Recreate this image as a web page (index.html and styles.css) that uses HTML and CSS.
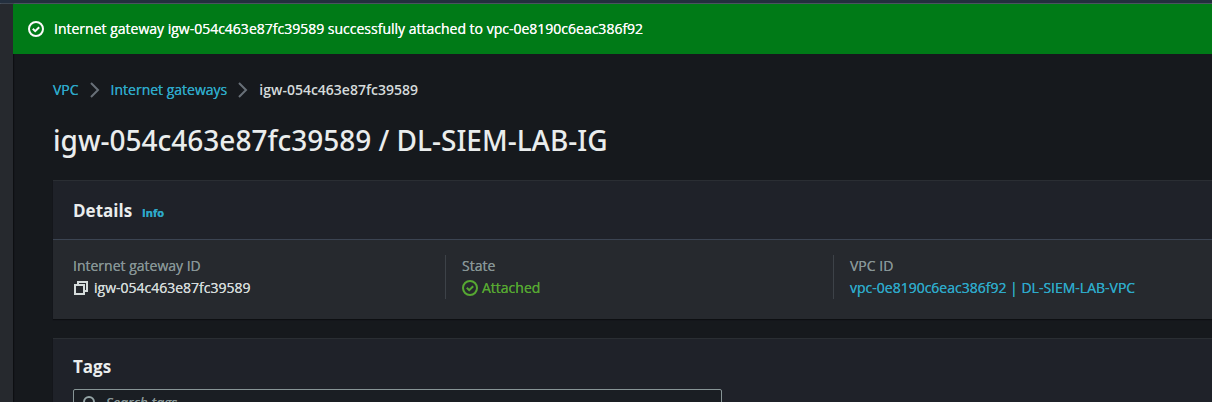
FILE: index.html
```html
<!DOCTYPE html>
<html lang="en">
<head>
<meta charset="utf-8">
<meta name="viewport" content="width=device-width, initial-scale=1">
<title>Internet gateway details</title>
<link rel="stylesheet" href="styles.css">
</head>
<body>
<div class="topbar"></div>
<div class="shell">
  <aside class="rail"></aside>
  <main class="main">
    <div class="flash" role="status">
      <svg class="icon" viewBox="0 0 16 16" aria-hidden="true"><circle cx="8" cy="8" r="7"/><path d="M4.8 7.8l2.4 2.4 4-4"/></svg>
      <span>Internet gateway igw-054c463e87fc39589 successfully attached to vpc-0e8190c6eac386f92</span>
    </div>
    <div class="content">
      <nav class="crumbs" aria-label="Breadcrumbs">
        <a href="#">VPC</a>
        <svg class="chevron" viewBox="0 0 10 16" aria-hidden="true"><path d="M1 1l7 7-7 7"/></svg>
        <a href="#">Internet gateways</a>
        <svg class="chevron" viewBox="0 0 10 16" aria-hidden="true"><path d="M1 1l7 7-7 7"/></svg>
        <span class="current">igw-054c463e87fc39589</span>
      </nav>
      <h1 class="title">igw-054c463e87fc39589 / DL-SIEM-LAB-IG</h1>
      <section class="card">
        <header class="card-header">
          <h2 class="heading">Details</h2>
          <a class="info" href="#">Info</a>
        </header>
        <dl class="fields">
          <div class="field">
            <dt>Internet gateway ID</dt>
            <dd>
              <button class="copy" type="button" aria-label="Copy ID"><svg class="icon" viewBox="0 0 16 16" aria-hidden="true"><path d="M2 5h9v9H2zM5 5V2h9v9h-3"/></svg></button>
              <span>igw-054c463e87fc39589</span>
            </dd>
          </div>
          <div class="field">
            <dt>State</dt>
            <dd class="success">
              <svg class="icon" viewBox="0 0 16 16" aria-hidden="true"><circle cx="8" cy="8" r="7"/><path d="M4.8 7.8l2.4 2.4 4-4"/></svg>
              <span>Attached</span>
            </dd>
          </div>
          <div class="field">
            <dt>VPC ID</dt>
            <dd><a href="#">vpc-0e8190c6eac386f92 | DL-SIEM-LAB-VPC</a></dd>
          </div>
        </dl>
      </section>
      <section class="card tags">
        <h2 class="heading">Tags</h2>
        <label class="search">
          <svg class="icon" viewBox="0 0 16 16" aria-hidden="true"><circle cx="7" cy="7" r="5"/><path d="M11 11l4 4"/></svg>
          <input type="search" placeholder="Search tags" aria-label="Search tags">
        </label>
      </section>
    </div>
  </main>
</div>
</body>
</html>
```
FILE: styles.css
```css
* { box-sizing: border-box; }

body {
  display: flex;
  flex-direction: column;
  height: 100vh;
  margin: 0;
  overflow: hidden;
  background: #16191d;
  color: #d5dbdb;
  font: 500 14px/22px "Open Sans", "Noto Sans", sans-serif;
  text-shadow: 0 0 0 currentColor;
}

a { color: #2ea9c9; text-decoration: none; text-shadow: 0 0 0 currentColor; }

.topbar { flex: none; height: 4px; background: #232f3e; border-bottom: 1px solid #4a5360; }
.shell { display: flex; flex: 1; min-height: 0; }
.rail { flex: none; width: 13px; background: #26292e; box-shadow: 1px 0 1px #0d0f12; }
.main { flex: 1; min-width: 0; overflow: hidden; }

.icon {
  flex: none;
  display: block;
  width: 16px;
  height: 16px;
  fill: none;
  stroke: currentColor;
  stroke-width: 2;
}

.flash {
  display: flex;
  align-items: center;
  gap: 10px;
  height: 50px;
  padding: 0 15px;
  background: #007a17;
  color: #fafafa;
}

.content { padding: 25px 0 0 40px; }

.crumbs { display: flex; align-items: center; gap: 11px; }
.crumbs .current { font-weight: 600; text-shadow: none; }
.chevron { width: 10px; height: 16px; fill: none; stroke: #687078; stroke-width: 2; }

.title {
  margin: 21px 0 22px;
  color: #eaeded;
  font-family: "Noto Sans", sans-serif;
  font-size: 28px;
  font-weight: 500;
  line-height: 36px;
  text-shadow: none;
}

.card {
  margin-bottom: 19px;
  border-top: 1px solid #2a2e33;
  background: #1f2229;
  box-shadow: 0 1px 1px #0d0f12;
}

.card-header {
  display: flex;
  align-items: baseline;
  gap: 10px;
  padding: 19px 20px 15px;
  border-bottom: 1px solid #3b4452;
}

.heading { margin: 0; color: #eaeded; font-size: 17px; font-weight: 700; line-height: 22px; text-shadow: none; }
.info { font-size: 11px; font-weight: 700; }

.fields {
  display: grid;
  grid-template-columns: 392fr 388fr 379fr;
  margin: 0;
  padding: 15px 0 20px;
  background: #26292e;
}

.field { padding-left: 16px; border-left: 1px solid #3d4248; }
.field:first-child { padding-left: 20px; border-left: 0; }
.field dt { color: #879596; }
.field dd { display: flex; align-items: center; gap: 5px; margin: 0; }
.field .success { gap: 4px; color: #56a832; }

.copy { padding: 0; border: 0; background: none; color: inherit; }

.tags { padding: 17px 20px; }

.search {
  display: flex;
  align-items: center;
  gap: 8px;
  width: 58%;
  height: 28px;
  margin-top: 11px;
  padding: 0 8px;
  border: 1px solid #879596;
  border-radius: 2px;
  background: #1a1e23;
  color: #95a5a6;
}

.search input { flex: 1; min-width: 0; padding: 0; border: 0; outline: 0; background: none; color: inherit; font: inherit; }
.search input::placeholder { color: #879596; font-style: italic; opacity: 1; text-shadow: 0 0 0 currentColor; }
```
